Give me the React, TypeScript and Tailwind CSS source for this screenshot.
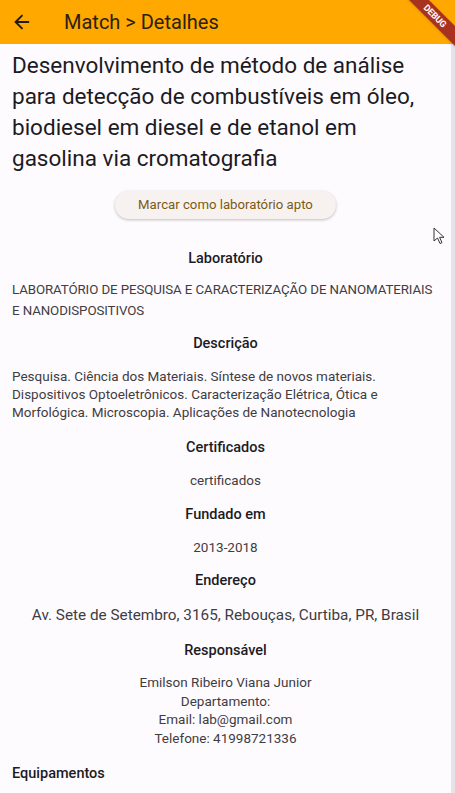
import { ArrowLeft } from 'lucide-react'

const Heading = ({ children }: { children: React.ReactNode }) => (
  <h2 className="text-center text-[14.5px] font-medium text-[#1c1b1f] leading-[20px]">{children}</h2>
)

const App = () => {
  return (
    <div className="relative w-[455px] h-[793px] overflow-hidden bg-[#fefbff] font-['Roboto',sans-serif]">
      {/* app bar */}
      <header className="h-[44px] bg-[#ffa800] flex items-center">
        <ArrowLeft size={22} strokeWidth={2} className="ml-[11px] text-[#1d1b16]" />
        <span className="ml-[31px] text-[20px] text-[#2a2112]">Match &gt; Detalhes</span>
      </header>

      {/* debug ribbon */}
      <div className="absolute top-[9px] right-[-25px] w-[90px] h-[14px] bg-[#a8321f] rotate-45 flex items-center justify-center shadow">
        <span className="text-[9px] font-bold text-white tracking-tight leading-none">DEBUG</span>
      </div>

      <div className="flex h-[749px]">
        <main className="flex-1 px-[12px] pt-[6px]">
          <h1 className="text-[22.5px] leading-[31px] text-[#1c1b1f]">
            Desenvolvimento de método de análise para detecção de combustíveis em óleo, biodiesel em diesel e de etanol em gasolina via cromatografia
          </h1>

          <div className="flex justify-center mt-[17px]">
            <button className="h-[28px] px-[23px] rounded-full bg-[#f7f2ef] shadow-[0_1px_3px_rgba(0,0,0,0.25)] text-[13.2px] text-[#7b5a14]">
              Marcar como laboratório apto
            </button>
          </div>

          <div className="mt-[30px]">
            <Heading>Laboratório</Heading>
            <p className="mt-[10px] text-[13.3px] leading-[21px] tracking-[-0.1px] text-[#3f3d42]">
              LABORATÓRIO DE PESQUISA E CARACTERIZAÇÃO DE NANOMATERIAIS E NANODISPOSITIVOS
            </p>
          </div>

          <div className="mt-[13px]">
            <Heading>Descrição</Heading>
            <p className="mt-[13px] text-[13.5px] leading-[18px] text-[#3f3d42]">
              Pesquisa. Ciência dos Materiais. Síntese de novos materiais. Dispositivos Optoeletrônicos. Caracterização Elétrica, Ótica e Morfológica. Microscopia. Aplicações de Nanotecnologia
            </p>
          </div>

          <div className="mt-[17px]">
            <Heading>Certificados</Heading>
            <p className="mt-[12px] text-center text-[13.5px] leading-[20px] text-[#3f3d42]">certificados</p>
          </div>

          <div className="mt-[15px]">
            <Heading>Fundado em</Heading>
            <p className="mt-[12px] text-center text-[13.5px] leading-[20px] text-[#3f3d42]">2013-2018</p>
          </div>

          <div className="mt-[14px]">
            <Heading>Endereço</Heading>
            <p className="mt-[13px] text-center text-[15.3px] leading-[22px] text-[#3f3d42]">
              Av. Sete de Setembro, 3165, Rebouças, Curtiba, PR, Brasil
            </p>
          </div>

          <div className="mt-[15px]">
            <Heading>Responsável</Heading>
            <div className="mt-[12px] text-center text-[13.5px] leading-[18.7px] text-[#3f3d42]">
              <p>Emilson Ribeiro Viana Junior</p>
              <p>Departamento:</p>
              <p>Email: lab@gmail.com</p>
              <p>Telefone: 41998721336</p>
            </div>
          </div>

          <h2 className="mt-[16px] text-[14.5px] font-medium leading-[20px] text-[#1c1b1f]">Equipamentos</h2>
        </main>
        <div className="w-[4px] bg-[#e6e4e9]" />
      </div>

      {/* mouse cursor */}
      <svg className="absolute left-[433px] top-[227px]" width="14" height="18" viewBox="0 0 14 18">
        <path d="M1 1 L1 14 L4.5 11 L7 16.5 L9 15.6 L6.6 10.3 L11 10.3 Z" fill="white" stroke="#333" strokeWidth="1" strokeLinejoin="round" />
      </svg>
    </div>
  )
}

export default App
